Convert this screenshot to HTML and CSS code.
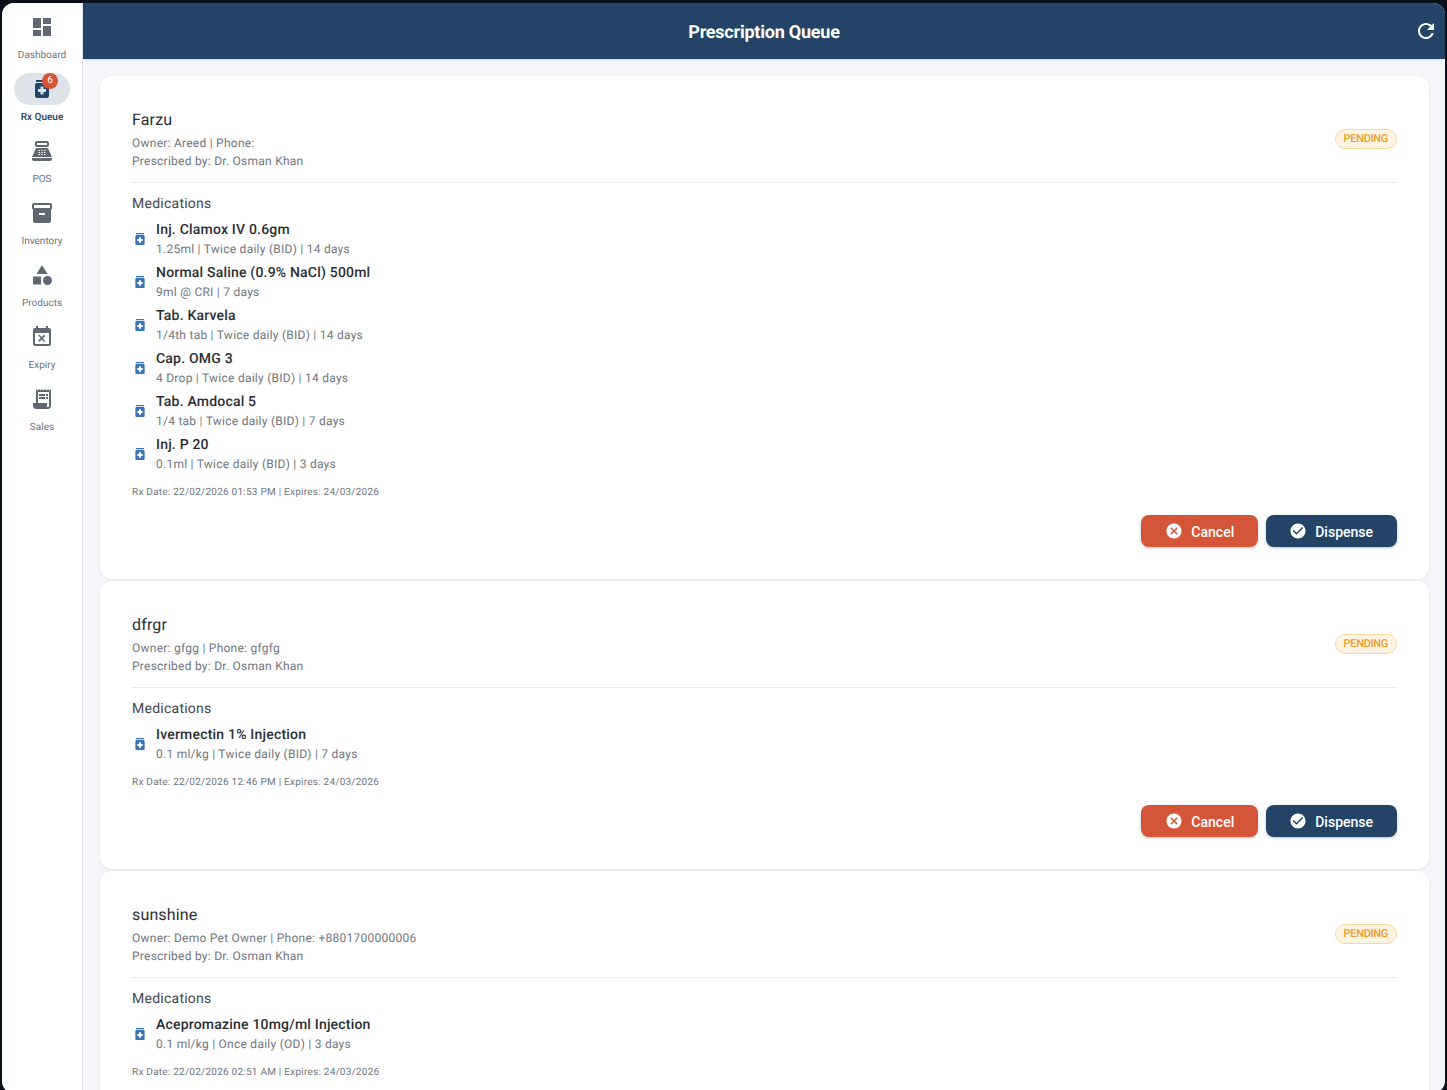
FILE: index.html
```html
<!DOCTYPE html>
<html lang="en">
<head>
<meta charset="utf-8">
<title>Prescription Queue</title>
<link rel="stylesheet" href="styles.css">
</head>
<body>
<div class="app">
  <nav class="rail">
    <a class="rail-item"><span class="rail-icon"><svg viewBox="0 0 24 24"><path d="M3 13h8V3H3v10zm0 8h8v-6H3v6zm10 0h8V11h-8v10zm0-18v6h8V3h-8z"/></svg></span><span class="rail-label">Dashboard</span></a>
    <a class="rail-item active"><span class="rail-icon"><svg viewBox="0 0 24 24"><path d="M6 3h12v2H6zM17 6H7c-1.1 0-2 .9-2 2v11c0 1.1.9 2 2 2h10c1.1 0 2-.9 2-2V8c0-1.1-.9-2-2-2zm-1 9h-2.500v2.500h-3V15H8v-3h2.500V9.500h3V12H16v3z"/></svg><span class="badge">6</span></span><span class="rail-label">Rx Queue</span></a>
    <a class="rail-item"><span class="rail-icon"><svg viewBox="0 0 24 24"><path d="M17 2H7c-1.100 0-2 .9-2 2v2c0 1.100.9 2 2 2h10c1.100 0 2-.9 2-2V4c0-1.100-.9-2-2-2zm0 4H7V4h10v2zM20 22H4c-1.100 0-2-.9-2-2v-1h20v1c0 1.100-.9 2-2 2zM18.530 10.190C18.210 9.470 17.490 9 16.700 9H7.300c-.79 0-1.510.47-1.830 1.190L2 18h20l-3.470-7.810zM10 16H8.500v-1H10v1zm0-2H8.500v-1H10v1zm0-2H8.500v-1H10v1zm2.750 4h-1.500v-1h1.500v1zm0-2h-1.500v-1h1.500v1zm0-2h-1.500v-1h1.500v1zm2.750 4H14v-1h1.500v1zm0-2H14v-1h1.500v1zm0-2H14v-1h1.500v1z"/></svg></span><span class="rail-label">POS</span></a>
    <a class="rail-item"><span class="rail-icon"><svg viewBox="0 0 24 24"><path d="M20 2H4c-1 0-2 .9-2 2v3.010c0 .72.43 1.340 1 1.690V20c0 1.100 1.100 2 2 2h14c.9 0 2-.9 2-2V8.700c.57-.35 1-.97 1-1.690V4c0-1.100-1-2-2-2zm-5 12H9v-2h6v2zm5-7H4V4l16-.02V7z"/></svg></span><span class="rail-label">Inventory</span></a>
    <a class="rail-item"><span class="rail-icon"><svg viewBox="0 0 24 24"><path d="M12 2l-5.500 9h11L12 2zM3 13.500h8v8H3z"/><circle cx="17.500" cy="17.500" r="4.500"/></svg></span><span class="rail-label">Products</span></a>
    <a class="rail-item"><span class="rail-icon"><svg viewBox="0 0 24 24"><path d="M9.310 17l2.440-2.440L14.190 17l1.060-1.060-2.440-2.440 2.440-2.440L14.190 9.500l-2.440 2.440L9.310 9.500l-1.060 1.060 2.440 2.440-2.440 2.440L9.310 17zM19 3h-1V1h-2v2H8V1H6v2H5c-1.110 0-1.990.9-1.990 2L3 19c0 1.100.89 2 2 2h14c1.100 0 2-.9 2-2V5c0-1.100-.9-2-2-2zm0 16H5V8h14v11z"/></svg></span><span class="rail-label">Expiry</span></a>
    <a class="rail-item"><span class="rail-icon"><svg viewBox="0 0 24 24"><path d="M19.500 3.500L18 2l-1.500 1.500L15 2l-1.500 1.500L12 2l-1.500 1.500L9 2 7.500 3.500 6 2v14H3v3c0 1.660 1.340 3 3 3h12c1.660 0 3-1.340 3-3V2l-1.500 1.500zM19 19c0 .55-.45 1-1 1s-1-.45-1-1v-3H8V5h11v14zM9 7h6v2H9zM16 7h2v2h-2zM9 10h6v2H9zM16 10h2v2h-2z"/></svg></span><span class="rail-label">Sales</span></a>
  </nav>
  <div class="main">
    <header class="topbar">
      <h1 class="title">Prescription Queue</h1>
      <button class="refresh" aria-label="Refresh"><svg viewBox="0 0 24 24"><path d="M17.650 6.350C16.200 4.900 14.210 4 12 4c-4.420 0-7.990 3.580-7.990 8s3.570 8 7.990 8c3.730 0 6.840-2.550 7.730-6h-2.080c-.82 2.330-3.040 4-5.650 4-3.310 0-6-2.690-6-6s2.690-6 6-6c1.660 0 3.140.69 4.220 1.780L13 11h7V4l-2.350 2.350z"/></svg></button>
    </header>
    <div class="content">

      <section class="card">
        <div class="card-head">
          <div>
            <div class="patient">Farzu</div>
            <div class="meta">Owner: Areed | Phone:</div>
            <div class="meta">Prescribed by: Dr. Osman Khan</div>
          </div>
          <span class="chip">PENDING</span>
        </div>
        <hr class="divider">
        <div class="section-title">Medications</div>
        <ul class="meds">
          <li class="med"><svg class="med-icon" viewBox="0 0 24 24"><use href="#pill"/></svg><div><div class="med-name">Inj. Clamox IV 0.6gm</div><div class="med-dose">1.25ml | Twice daily (BID) | 14 days</div></div></li>
          <li class="med"><svg class="med-icon" viewBox="0 0 24 24"><use href="#pill"/></svg><div><div class="med-name">Normal Saline (0.9% NaCl) 500ml</div><div class="med-dose">9ml @ CRI | 7 days</div></div></li>
          <li class="med"><svg class="med-icon" viewBox="0 0 24 24"><use href="#pill"/></svg><div><div class="med-name">Tab. Karvela</div><div class="med-dose">1/4th tab | Twice daily (BID) | 14 days</div></div></li>
          <li class="med"><svg class="med-icon" viewBox="0 0 24 24"><use href="#pill"/></svg><div><div class="med-name">Cap. OMG 3</div><div class="med-dose">4 Drop | Twice daily (BID) | 14 days</div></div></li>
          <li class="med"><svg class="med-icon" viewBox="0 0 24 24"><use href="#pill"/></svg><div><div class="med-name">Tab. Amdocal 5</div><div class="med-dose">1/4 tab | Twice daily (BID) | 7 days</div></div></li>
          <li class="med"><svg class="med-icon" viewBox="0 0 24 24"><use href="#pill"/></svg><div><div class="med-name">Inj. P 20</div><div class="med-dose">0.1ml | Twice daily (BID) | 3 days</div></div></li>
        </ul>
        <div class="dates">Rx Date: 22/02/2026 01:53 PM | Expires: 24/03/2026</div>
        <div class="actions">
          <button class="btn btn-cancel"><svg viewBox="0 0 24 24"><use href="#cancel"/></svg><span class="btn-label">Cancel</span></button>
          <button class="btn btn-dispense"><svg viewBox="0 0 24 24"><use href="#check"/></svg><span class="btn-label">Dispense</span></button>
        </div>
      </section>

      <section class="card">
        <div class="card-head">
          <div>
            <div class="patient">dfrgr</div>
            <div class="meta">Owner: gfgg | Phone: gfgfg</div>
            <div class="meta">Prescribed by: Dr. Osman Khan</div>
          </div>
          <span class="chip">PENDING</span>
        </div>
        <hr class="divider">
        <div class="section-title">Medications</div>
        <ul class="meds">
          <li class="med"><svg class="med-icon" viewBox="0 0 24 24"><use href="#pill"/></svg><div><div class="med-name">Ivermectin 1% Injection</div><div class="med-dose">0.1 ml/kg | Twice daily (BID) | 7 days</div></div></li>
        </ul>
        <div class="dates">Rx Date: 22/02/2026 12:46 PM | Expires: 24/03/2026</div>
        <div class="actions">
          <button class="btn btn-cancel"><svg viewBox="0 0 24 24"><use href="#cancel"/></svg><span class="btn-label">Cancel</span></button>
          <button class="btn btn-dispense"><svg viewBox="0 0 24 24"><use href="#check"/></svg><span class="btn-label">Dispense</span></button>
        </div>
      </section>

      <section class="card">
        <div class="card-head">
          <div>
            <div class="patient">sunshine</div>
            <div class="meta">Owner: Demo Pet Owner | Phone: +8801700000006</div>
            <div class="meta">Prescribed by: Dr. Osman Khan</div>
          </div>
          <span class="chip">PENDING</span>
        </div>
        <hr class="divider">
        <div class="section-title">Medications</div>
        <ul class="meds">
          <li class="med"><svg class="med-icon" viewBox="0 0 24 24"><use href="#pill"/></svg><div><div class="med-name">Acepromazine 10mg/ml Injection</div><div class="med-dose">0.1 ml/kg | Once daily (OD) | 3 days</div></div></li>
        </ul>
        <div class="dates">Rx Date: 22/02/2026 02:51 AM | Expires: 24/03/2026</div>
      </section>

    </div>
  </div>
</div>
<svg class="defs" aria-hidden="true">
  <defs>
    <g id="pill"><path d="M6 3h12v2H6zM17 6H7c-1.100 0-2 .9-2 2v11c0 1.100.9 2 2 2h10c1.100 0 2-.9 2-2V8c0-1.100-.9-2-2-2zm-1 9h-2.500v2.500h-3V15H8v-3h2.500V9.500h3V12H16v3z"/></g>
    <g id="cancel"><path d="M12 2C6.470 2 2 6.470 2 12s4.470 10 10 10 10-4.470 10-10S17.530 2 12 2zm5 13.590L15.590 17 12 13.410 8.410 17 7 15.590 10.590 12 7 8.410 8.410 7 12 10.590 15.590 7 17 8.410 13.410 12 17 15.590z"/></g>
    <g id="check"><path d="M12 2C6.480 2 2 6.480 2 12s4.480 10 10 10 10-4.480 10-10S17.520 2 12 2zm-2 15l-5-5 1.410-1.410L10 14.170l7.590-7.590L19 8l-9 9z"/></g>
  </defs>
</svg>
</body>
</html>
```
FILE: styles.css
```css
* { box-sizing: border-box; }
html, body { height: 100%; margin: 0; }
body {
  background: #0b0f1a;
  font-family: Roboto, "Liberation Sans", sans-serif;
  text-rendering: geometricPrecision;
  overflow: hidden;
  padding: 3px 2px 0 2px;
}
.defs { width: 0; height: 0; display: block; overflow: hidden; }
.app {
  display: flex;
  height: 1090px;
  background: #f5f6f9;
  border-radius: 12px;
  overflow: hidden;
}
.rail {
  flex: 0 0 81px;
  background: #fff;
  border-right: 1px solid #e3e5e9;
  display: flex;
  flex-direction: column;
  align-items: center;
  padding-top: 8px;
}
.rail-item {
  width: 80px;
  height: 62px;
  display: flex;
  flex-direction: column;
  align-items: center;
}
.rail-icon {
  position: relative;
  width: 56px;
  height: 32px;
  border-radius: 16px;
  display: flex;
  align-items: center;
  justify-content: center;
}
.rail-icon svg { width: 24px; height: 24px; fill: #5f6871; }
.rail-label { font-size: 10px; line-height: 14px; margin-top: 6px; color: #6b737b; }
.active .rail-icon { background: #dde3e9; }
.active .rail-icon svg { fill: #234466; }
.active .rail-label { color: #234466; font-weight: 500; }
.badge {
  position: absolute;
  top: 0;
  left: 28px;
  width: 16px;
  height: 16px;
  border-radius: 50%;
  background: #d45537;
  color: #fff;
  font-size: 10px;
  line-height: 16px;
  text-align: center;
}
.main { flex: 1; min-width: 0; display: flex; flex-direction: column; }
.topbar {
  flex: 0 0 56px;
  background: #234466;
  color: #fff;
  display: flex;
  align-items: center;
  justify-content: center;
  padding-top: 2px;
  position: relative;
  box-shadow: 0 1px 2px rgba(0,0,0,.1);
}
.title { margin: 0; font-size: 18px; font-weight: 700; letter-spacing: -.22px; }
.refresh {
  position: absolute;
  right: 7px;
  top: 16px;
  width: 24px;
  height: 24px;
  padding: 0;
  border: 0;
  background: none;
}
.refresh svg { width: 24px; height: 24px; fill: #fff; display: block; }
.content { flex: 1; padding: 17px 16px 0 17px; overflow: hidden; display: flex; flex-direction: column; gap: 2px; }
.card {
  flex: none;
  background: #fff;
  border-radius: 12px;
  padding: 32px;
  box-shadow: 0 1px 3px rgba(0,0,0,.08);
}
.card-head { display: flex; justify-content: space-between; align-items: center; }
.patient { font-size: 16px; line-height: 24px; letter-spacing: .15px; color: #2a2e32; margin-bottom: 2px; }
.meta { font-size: 12px; line-height: 18px; letter-spacing: .25px; color: #6f767d; }
.chip {
  height: 20px;
  padding: 0 8px;
  border: 1px solid #f6d8a5;
  border-radius: 10px;
  background: #fdf3e3;
  color: #eb9c26;
  font-size: 11px;
  font-weight: 500;
  line-height: 18px;
  letter-spacing: -.32px;
}
.divider { border: 0; height: 1px; background: #e8eaed; margin: 12px 0 11px; }
.section-title { font-size: 14px; line-height: 20px; letter-spacing: .25px; color: #3f4449; margin-bottom: 5px; }
.meds { list-style: none; margin: 0; padding: 0; display: flex; flex-direction: column; gap: 3px; }
.med { display: flex; align-items: center; height: 40px; }
.med-icon { width: 16px; height: 16px; fill: #3b74b5; margin-right: 8px; flex: none; }
.med-name { font-size: 14px; line-height: 20px; font-weight: 500; letter-spacing: .2px; color: #2a2e32; }
.med-dose { font-size: 12px; line-height: 18px; letter-spacing: .25px; color: #6f767d; }
.dates { font-size: 10px; line-height: 14px; letter-spacing: .24px; color: #6f767d; margin-top: 12px; }
.actions { display: flex; justify-content: flex-end; gap: 8px; margin-top: 15px; }
.btn {
  height: 32px;
  border: 0;
  border-radius: 8px;
  display: flex;
  align-items: center;
  gap: 8px;
  padding: 0 24px;
  color: #fff;
  font-family: inherit;
  font-size: 14px;
  font-weight: 500;
  box-shadow: 0 1px 3px rgba(0,0,0,.25);
}
.btn-label { padding-top: 1px; }
.btn svg { width: 18px; height: 18px; fill: #fff; }
.btn-cancel { background: #d45537; }
.btn-dispense { background: #234466; padding-left: 23px; }
```
